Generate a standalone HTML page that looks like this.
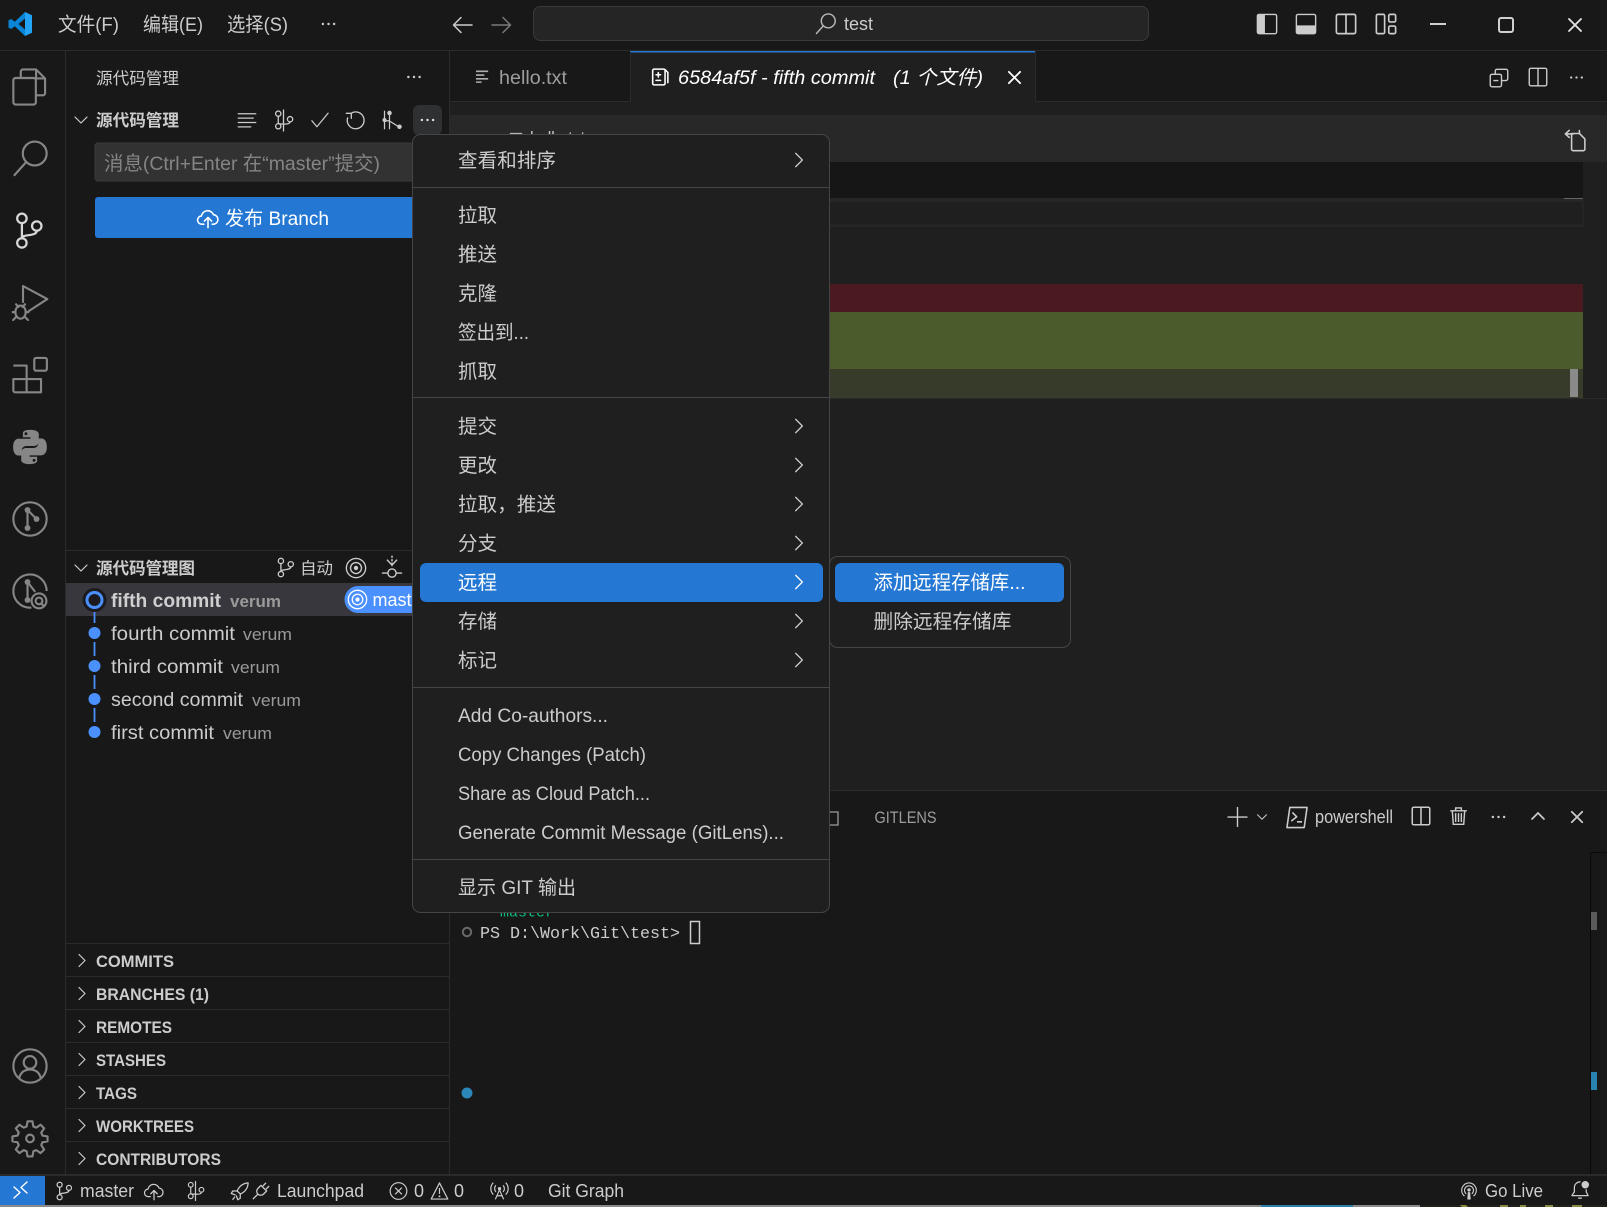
<!DOCTYPE html>
<html><head><meta charset="utf-8"><title>VS Code</title>
<style>
html,body{margin:0;padding:0;background:#181818;width:1607px;height:1207px;overflow:hidden}
svg{display:block;position:absolute;left:0;top:0}
symbol{overflow:visible}
text{font-family:"Liberation Sans","Noto Sans CJK SC",sans-serif;fill:#cccccc;font-size:19.5px}
.c{fill:none;stroke:currentColor;stroke-width:1;stroke-linecap:round;stroke-linejoin:round}
.f{fill:currentColor;stroke:none}
.s{font-size:16.6px}
.b{font-weight:700}
.h{font-size:17px;font-weight:700}
.st{font-size:18px;fill:#cccccc}
.v{font-size:17px;fill:#9a9a9a}
.m{font-family:"Liberation Mono","Noto Sans CJK SC",monospace;font-size:16.7px}
</style></head><body>
<svg width="1607" height="1207" viewBox="0 0 1607 1207" xmlns="http://www.w3.org/2000/svg">
<defs>
<symbol id="files" viewBox="0 0 16 16"><path style="stroke-width:inherit" fill="none" stroke="currentColor" stroke-linecap="round" stroke-linejoin="round" d="M3.900 4V1.200a1 1 0 0 1 1-1h5.800l4 4v6.500a1 1 0 0 1-1 1h-2.900M10.700.2v4h4M1.600 4h8a1 1 0 0 1 1 1v9.800a1 1 0 0 1-1 1h-8a1 1 0 0 1-1-1V5a1 1 0 0 1 1-1z"/></symbol>
<symbol id="search" viewBox="0 0 16 16"><circle fill="none" stroke="currentColor" cx="10.100" cy="6" r="5.300"/><path fill="none" stroke="currentColor" stroke-linecap="round" d="M6.300 9.800L1.100 15.600"/></symbol>
<symbol id="scm" viewBox="0 0 16 16"><g fill="none" stroke="currentColor" stroke-linecap="round"><circle cx="4.400" cy="2.400" r="2.100"/><circle cx="4.400" cy="13.300" r="2.100"/><circle cx="11" cy="5.800" r="2.100"/><path d="M4.400 4.500v6.700M11 7.900c0 2.700-6.600 1.300-6.600 3.300"/></g></symbol>
<symbol id="debug" viewBox="0 0 16 16"><g fill="none" stroke="currentColor" stroke-linecap="round" stroke-linejoin="round"><path d="M4.900.9L15.700 6.700 7.500 12M4.900.9V8"/><ellipse cx="3.800" cy="12.500" rx="2.300" ry="2.900"/><path d="M1.800 9l1.100 1.200M5.800 9L4.700 10.200M.3 12.500h1.200M6.100 12.500h1.200M.5 16l1.600-1.600M7.100 16l-1.600-1.600"/></g></symbol>
<symbol id="ext" viewBox="0 0 16 16"><g fill="none" stroke="currentColor" stroke-linejoin="round"><rect x="9.900" y=".4" width="5.600" height="5.700" rx=".8"/><path d="M.6 3.800h5.900v11.900M.6 9.800h12.300v5.900H1.400a.8.800 0 0 1-.8-.8z"/></g></symbol>
<symbol id="python" viewBox="0 0 16 16"><g id="pyh"><path fill="currentColor" d="M8 .8C4.800.8 5 2.200 5 2.200v1.700h3.200v.6H3.400S.9 4.300.9 8s2.200 3.600 2.200 3.600h1.400V9.800s-.1-2.200 2.100-2.200h3s2.100 0 2.100-2V2.600S12 .8 8 .8z"/><circle cx="6.300" cy="2.400" r=".6" fill="#181818"/></g><use href="#pyh" transform="rotate(180 8 8)"/></symbol>
<symbol id="gitg" viewBox="0 0 16 16"><circle fill="none" stroke="currentColor" cx="8" cy="8" r="7.400"/><g fill="currentColor"><circle cx="6.900" cy="4" r="1.300"/><circle cx="6.900" cy="12" r="1.300"/><circle cx="10.900" cy="8" r="1.300"/></g><path fill="none" stroke="currentColor" d="M6.900 4v8M6.900 4l4 4"/></symbol>
<symbol id="insp" viewBox="0 0 16 16"><path fill="none" stroke="currentColor" d="M8.600 15.400A7.400 7.400 0 1 1 15.400 8"/><g fill="currentColor"><circle cx="6.900" cy="4" r="1.300"/><circle cx="6.900" cy="12" r="1.300"/></g><path fill="none" stroke="currentColor" d="M6.900 4v8M6.900 4l3.400 4.400"/><circle fill="none" stroke="currentColor" cx="12" cy="12.400" r="3.300"/><circle fill="none" stroke="currentColor" cx="12" cy="12.400" r="1.500"/><path fill="none" stroke="currentColor" d="M13.200 13.700l1 1"/></symbol>
<symbol id="acct" viewBox="0 0 16 16"><g fill="none" stroke="currentColor" stroke-linecap="round"><circle cx="8" cy="8" r="7.400"/><circle cx="8" cy="6.400" r="2.800"/><path d="M3.200 13.400c.7-2.800 2.600-3.800 4.800-3.800s4.100 1 4.800 3.800"/></g></symbol>
<symbol id="gear" viewBox="0 0 16 16"><path fill="none" stroke="currentColor" stroke-linejoin="round" d="M6.900.6h2.200l.4 2.300 1.300.5 1.900-1.300 1.600 1.600-1.300 1.900.5 1.300 2.300.4v2.200l-2.300.4-.5 1.300 1.300 1.900-1.600 1.600-1.900-1.300-1.300.5-.4 2.300H6.900l-.4-2.300-1.300-.5-1.900 1.300L1.700 13.100 3 11.200l-.5-1.300-2.300-.4V7.300l2.300-.4.5-1.300L1.700 3.700l1.600-1.600 1.900 1.300 1.300-.5z"/><circle fill="none" stroke="currentColor" cx="8" cy="8.200" r="1.700"/></symbol>
<symbol id="list" viewBox="0 0 16 16"><path class="c" d="M1 3h14M1 6.500h12M1 10h14M1 13.500h10"/></symbol>
<symbol id="cgraph" viewBox="0 0 16 16"><circle class="c" cx="4" cy="2.800" r="2"/><circle class="c" cx="4" cy="12.400" r="2"/><circle class="c" cx="13" cy="7" r="2"/><path class="c" d="M8 0v16M4 4.800v5.600M13 9c0 2-5 2-9 1.400"/></symbol>
<symbol id="chk" viewBox="0 0 16 16"><path class="c" d="M1.500 8.600l4 4.800L14.500 2.500"/></symbol>
<symbol id="refr" viewBox="0 0 16 16"><path class="c" d="M4.500 2.600A6.400 6.400 0 1 1 2 6M4.800 6.400V2.500H1"/></symbol>
<symbol id="fork" viewBox="0 0 16 16"><circle class="f" cx="6" cy="2.400" r="1.800"/><circle class="f" cx="2" cy="8" r="1.600"/><circle class="f" cx="14" cy="13.400" r="1.800"/><path class="c" d="M6 1v14M2 1v14M2 9l3.500-.5 8 5" stroke-width="1.200"/></symbol>
<symbol id="dots" viewBox="0 0 16 16"><circle class="f" cx="3" cy="8" r="1.100"/><circle class="f" cx="8" cy="8" r="1.100"/><circle class="f" cx="13" cy="8" r="1.100"/></symbol>
<symbol id="cd" viewBox="0 0 16 16"><path fill="none" stroke="currentColor" stroke-linecap="round" stroke-linejoin="round" d="M2 5l6 6 6-6"/></symbol>
<symbol id="cr" viewBox="0 0 16 16"><path fill="none" stroke="currentColor" stroke-linecap="round" stroke-linejoin="round" d="M5 2l6 6-6 6"/></symbol>
<symbol id="x" viewBox="0 0 16 16"><path fill="none" stroke="currentColor" stroke-linecap="round" d="M2 2l12 12M14 2L2 14"/></symbol>
<symbol id="cloud" viewBox="0 0 16 16"><g fill="none" stroke="currentColor" stroke-linecap="round" stroke-linejoin="round"><path d="M5 12.500H3.600a3 3 0 0 1-.4-6A4.600 4.600 0 0 1 12 5.600a3.500 3.500 0 0 1 .5 6.900H11"/><path d="M8 15V8M5.400 10.200L8 7.600l2.600 2.600"/></g></symbol>
<symbol id="branch" viewBox="0 0 16 16"><g fill="none" stroke="currentColor" stroke-linecap="round"><circle cx="4.500" cy="3" r="2"/><circle cx="4.500" cy="13" r="2"/><circle cx="12" cy="5.500" r="2"/><path d="M4.500 5v6M12 7.500c0 3-7.500 1.500-7.500 3.500"/></g></symbol>
<symbol id="target" viewBox="0 0 16 16"><circle fill="none" stroke="currentColor" cx="8" cy="8" r="7"/><circle fill="none" stroke="currentColor" cx="8" cy="8" r="4"/><circle fill="currentColor" cx="8" cy="8" r="1.600"/></symbol>
<symbol id="down" viewBox="0 0 16 16"><path class="c" d="M8 0v1M8 2.600v1M8 5.200V7M4.600 3l3.400 3.600L11.400 3M1 12.400h3.600M11.400 12.400H15"/><circle class="c" cx="8" cy="12.400" r="3"/></symbol>
<symbol id="l1" viewBox="0 0 16 16"><rect class="c" x="1" y="1" width="14" height="14" rx="1.200"/><rect class="f" x="1" y="1" width="5.500" height="14"/></symbol>
<symbol id="l2" viewBox="0 0 16 16"><rect class="c" x="1" y="1" width="14" height="14" rx="1.200"/><rect class="f" x="1" y="9" width="14" height="6"/></symbol>
<symbol id="l3" viewBox="0 0 16 16"><rect fill="none" stroke="currentColor" x="1" y="1" width="14" height="14" rx="1.200"/><path fill="none" stroke="currentColor" d="M8 1v14"/></symbol>
<symbol id="l4" viewBox="0 0 16 16"><g fill="none" stroke="currentColor"><rect x="1" y="1" width="6" height="14" rx="1"/><rect x="10" y="1" width="5" height="5.500" rx="1"/><rect x="10" y="9.500" width="5" height="5.500" rx="1"/></g></symbol>
<symbol id="file" viewBox="0 0 16 16"><g fill="none" stroke="currentColor" stroke-linecap="round"><rect x="1.500" y="1" width="11" height="14" rx="1.200"/><path d="M12.500 1.500l2.500 2.500v9M4.500 6h4M6.500 4v4M4.500 11h4"/></g></symbol>
<symbol id="lines" viewBox="0 0 16 16"><path fill="none" stroke="currentColor" d="M1 2.500h13M1 6.500h9M1 10.500h13M1 14h6"/></symbol>
<symbol id="copy2" viewBox="0 0 16 16"><g fill="none" stroke="currentColor"><rect x="1" y="5" width="9" height="10" rx="1.400"/><path d="M5 5V2.400A1.400 1.400 0 0 1 6.400 1h7.200A1.400 1.400 0 0 1 15 2.400v6.200A1.400 1.400 0 0 1 13.600 10H10M3.500 10h4"/></g></symbol>
<symbol id="rev" viewBox="0 0 16 16"><g fill="none" stroke="currentColor" stroke-linecap="round" stroke-linejoin="round"><path d="M5.500 3.500h5l3.500 3.500v6.500a1 1 0 0 1-1 1H6.500a1 1 0 0 1-1-1zM10.500 3.500V1.600M1.500 3.800L4 1.500M1.500 3.800L4 6M1.500 3.800h5"/></g></symbol>
<symbol id="term" viewBox="0 0 16 16"><path fill="none" stroke="currentColor" stroke-linejoin="round" d="M3 1h12l-2 14H1zM4.800 4.500l3 3-3.800 3M8 11h3.500"/></symbol>
<symbol id="trash" viewBox="0 0 16 16"><path fill="none" stroke="currentColor" d="M1 3.600h14M5.600 3.400V1.200h4.800v2.200M2.800 3.600l.8 11.400h8.800l.8-11.400M5.600 5.600v7.400M8 5.600v7.400M10.400 5.600v7.400"/></symbol>
<symbol id="plus" viewBox="0 0 16 16"><path fill="none" stroke="currentColor" d="M8 0v16M0 8h16"/></symbol>
<symbol id="up" viewBox="0 0 16 16"><path fill="none" stroke="currentColor" stroke-linecap="round" d="M2 11l6-6 6 6"/></symbol>
<symbol id="rocket" viewBox="0 0 16 16"><path fill="none" stroke="currentColor" stroke-linejoin="round" d="M14.500 1.500c-4 .3-7 2.500-8.800 6.500l2.600 2.400c4-1.800 6-4.800 6.200-8.900zM5.500 8H2.200L1 10l3.500 1.200M8.200 10.500V13.800L6.200 15 5 11.500M4 12.500l-2 2.500"/></symbol>
<symbol id="plug" viewBox="0 0 16 16"><path fill="none" stroke="currentColor" stroke-linejoin="round" d="M9.500 4L12 1.500M12 6.500L14.500 4M8 3.500l4.500 4.500-2.500 2.500a3 3 0 0 1-4.500-4.500zM5.500 10.500L1.500 14.500"/></symbol>
<symbol id="err" viewBox="0 0 16 16"><circle fill="none" stroke="currentColor" cx="8" cy="8" r="7"/><path fill="none" stroke="currentColor" d="M5.200 5.200l5.600 5.600M10.800 5.200l-5.600 5.600"/></symbol>
<symbol id="warn" viewBox="0 0 16 16"><path fill="none" stroke="currentColor" stroke-linejoin="round" d="M8 1.200L15 14.800H1zM8 5.500v5"/><circle fill="currentColor" cx="8" cy="12.500" r=".8"/></symbol>
<symbol id="radio" viewBox="0 0 16 16"><circle fill="currentColor" cx="8" cy="6" r="1.400"/><path fill="none" stroke="currentColor" d="M5 3.200a4 4 0 0 0 0 5.600M11 3.200a4 4 0 0 1 0 5.600M2.800 1a7 7 0 0 0 0 10M13.200 1a7 7 0 0 1 0 10M8 7l-3.500 8M8 7l3.500 8M5.800 12h4.400"/></symbol>
<symbol id="live" viewBox="0 0 16 16"><path fill="none" stroke="currentColor" d="M4 12.500a6.500 6.500 0 1 1 8 0M5.500 10.500a4 4 0 1 1 5 0"/><circle fill="currentColor" cx="8" cy="7" r="1.500"/><path fill="currentColor" d="M7 9h2l.5 6.500h-3z"/></symbol>
<symbol id="bell" viewBox="0 0 16 16"><path fill="none" stroke="currentColor" stroke-linejoin="round" d="M8.500 1.500A4.600 4.600 0 0 0 3.500 6v3.500L1.500 12.500h13l-1.500-3V7.500M6.500 14.500h3"/><circle fill="currentColor" cx="12.200" cy="3.800" r="3"/></symbol>
</defs>

<!-- base regions -->
<rect width="1607" height="1207" fill="#181818"/>
<rect x="0" y="50" width="1607" height="1" fill="#2b2b2b"/>
<rect x="65" y="51" width="1" height="1124" fill="#2b2b2b"/>
<rect x="449" y="51" width="1" height="1124" fill="#2b2b2b"/>

<!-- editor -->
<rect x="450" y="102" width="1157" height="688" fill="#1f1f1f"/>
<rect x="450" y="101" width="1157" height="1" fill="#2b2b2b"/>
<rect x="450" y="115" width="1157" height="47" fill="#282828"/>
<rect x="450" y="162" width="1133" height="36" fill="#161616"/>
<rect x="450" y="198" width="1133" height="3" fill="#262626"/>
<rect x="450" y="201" width="1133" height="24" fill="#1f1f1f" stroke="#2a2a2a"/>
<rect x="450" y="225" width="1133" height="2" fill="#262626"/>
<rect x="1564" y="198" width="19" height="1" fill="#666"/>
<rect x="450" y="284" width="1133" height="28" fill="#4b1a20"/>
<rect x="450" y="312" width="1133" height="57" fill="#4b5b2c"/>
<rect x="450" y="369" width="1133" height="29" fill="#373c2a"/>
<rect x="450" y="398" width="1157" height="1" fill="#2b2b2b"/>
<rect x="1570" y="369" width="8" height="28" fill="#8a8a8a"/>

<!-- tabs -->
<rect x="630" y="51" width="405" height="51" fill="#1f1f1f"/>
<rect x="630" y="51" width="405" height="1.500" fill="#2678d4"/>
<rect x="630" y="52" width="1" height="50" fill="#2b2b2b"/>
<rect x="1035" y="52" width="1" height="50" fill="#2b2b2b"/>
<g style="color:#b0b0b0" stroke-width="1.700"><use href="#lines" x="475" y="69" width="15" height="15"/></g>
<text x="499" y="84" textLength="68" lengthAdjust="spacingAndGlyphs" style="fill:#9d9d9d">hello.txt</text>
<g style="color:#ffffff" stroke-width="1.400"><use href="#file" x="651" y="68" width="18" height="18"/></g>
<text x="678" y="84" textLength="197" lengthAdjust="spacingAndGlyphs" font-style="italic" style="fill:#ffffff">6584af5f - fifth commit</text>
<text x="893" y="84" textLength="90" lengthAdjust="spacingAndGlyphs" font-style="italic" style="fill:#ffffff">(1 个文件)</text>
<g style="color:#ffffff" stroke-width="1.900"><use href="#x" x="1007" y="70" width="15" height="15"/></g>
<g style="color:#cccccc" stroke-width="1.100"><use href="#copy2" x="1489" y="68" width="20" height="20"/><use href="#l3" x="1528" y="67" width="20" height="20"/></g>
<g style="color:#cccccc"><use href="#dots" x="1567" y="69" width="19" height="17"/></g>
<g style="color:#cccccc" stroke-width="1"><use href="#rev" x="1563" y="128" width="25" height="25"/></g>
<text x="530" y="145" textLength="55" lengthAdjust="spacingAndGlyphs">hello.txt</text>
<g style="color:#cccccc" stroke-width="1"><use href="#lines" x="509" y="131" width="15" height="15"/></g>

<!-- titlebar -->
<g><path fill="#0a84d6" d="M25 12L14.800 21.800 11.200 19 8.500 20.200V27.800L11.200 29 14.800 26.200 25 36V29.500L18.500 24 25 18.500Z"/><path fill="#23a3f5" d="M25 12L32 15.200V32.800L25 36Z"/></g>
<text x="58" y="31" textLength="61" lengthAdjust="spacingAndGlyphs">文件(F)</text>
<text x="143" y="31" textLength="60" lengthAdjust="spacingAndGlyphs">编辑(E)</text>
<text x="227" y="31" textLength="61" lengthAdjust="spacingAndGlyphs">选择(S)</text>
<g style="color:#cccccc"><use href="#dots" x="318" y="15" width="21" height="18"/></g>
<path d="M472 25H454M461 17.500L453.500 25 461 32.500" fill="none" stroke="#cccccc" stroke-width="1.500" stroke-linecap="round" stroke-linejoin="round"/>
<path d="M492 25H510M503 17.500L510.500 25 503 32.500" fill="none" stroke="#7a7a7a" stroke-width="1.500" stroke-linecap="round" stroke-linejoin="round"/>
<rect x="533.500" y="6.500" width="615" height="34" rx="7" fill="#252525" stroke="#3a3a3a"/>
<g style="color:#b8b8b8" stroke-width="1.100"><use href="#search" x="815" y="13" width="21" height="21"/></g>
<text x="844" y="30" textLength="29" lengthAdjust="spacingAndGlyphs" class="st">test</text>
<g style="color:#cccccc" stroke-width="1.200"><use href="#l1" x="1256" y="13" width="22" height="22"/><use href="#l2" x="1295" y="13" width="22" height="22"/><use href="#l3" x="1335" y="13" width="22" height="22"/><use href="#l4" x="1375" y="13" width="22" height="22"/></g>
<rect x="1430" y="23" width="16" height="2" fill="#d0d0d0"/>
<rect x="1499" y="18" width="14" height="14" rx="2" fill="none" stroke="#d0d0d0" stroke-width="2"/>
<g style="color:#e0e0e0" stroke-width="1.900"><use href="#x" x="1567" y="17" width="16" height="16"/></g>

<!-- activity bar -->
<g style="color:#868686" stroke-width=".95">
<use href="#files" x="12" y="69" width="36" height="36"/>
<use href="#search" x="12" y="140" width="36" height="36"/>
<use href="#debug" x="12" y="284" width="36" height="36"/>
<use href="#ext" x="12" y="357" width="36" height="36"/>
<use href="#python" x="11" y="428" width="38" height="38"/>
<use href="#gitg" x="12" y="501" width="36" height="36"/>
<use href="#insp" x="12" y="573" width="36" height="36"/>
<use href="#acct" x="12" y="1048" width="36" height="36"/>
<use href="#gear" x="12" y="1120" width="36" height="36"/>
</g>
<g style="color:#d7d7d7" stroke-width="1"><use href="#scm" x="12" y="213" width="36" height="36"/></g>

<!-- sidebar -->
<text class="s" x="96" y="84" textLength="83">源代码管理</text>
<g style="color:#cccccc"><use href="#dots" x="404" y="68" width="20" height="18"/></g>
<g style="color:#cccccc" stroke-width="1.200"><use href="#cd" x="73" y="112" width="16" height="16"/></g>
<text class="s b" x="96" y="126" textLength="83">源代码管理</text>
<g style="color:#cccccc" stroke-width="1.200">
<use href="#list" x="237" y="110" width="20" height="20"/>
<use href="#cgraph" x="273" y="110" width="21" height="21"/>
<use href="#chk" x="310" y="110" width="20" height="20"/>
<use href="#refr" x="345" y="110" width="21" height="21"/>
<use href="#fork" x="382" y="110" width="20" height="20"/>
</g>
<rect x="413" y="105" width="29" height="30" rx="6" fill="#2f3031"/>
<g style="color:#dddddd"><use href="#dots" x="417" y="111" width="21" height="18"/></g>
<rect x="95" y="143" width="330" height="38" rx="3" fill="#323232" stroke="#3a3a3a"/>
<text x="104" y="170" textLength="276" lengthAdjust="spacingAndGlyphs" style="fill:#858585">消息(Ctrl+Enter 在“master”提交)</text>
<rect x="95" y="197" width="330" height="41" rx="3" fill="#2477d2"/>
<g style="color:#ffffff" stroke-width="1.150"><use href="#cloud" x="197" y="207" width="22" height="22"/></g>
<text x="225" y="225" textLength="104" lengthAdjust="spacingAndGlyphs" style="fill:#fff">发布 Branch</text>

<!-- graph -->
<rect x="66" y="550" width="383" height="1" fill="#2b2b2b"/>
<g style="color:#cccccc" stroke-width="1.200"><use href="#cd" x="73" y="560" width="16" height="16"/></g>
<text class="s b" x="96" y="574" textLength="99">源代码管理图</text>
<g style="color:#cccccc" stroke-width="1"><use href="#branch" x="275" y="557" width="21" height="21"/></g>
<text class="s" x="300" y="574" textLength="33">自动</text>
<g style="color:#cccccc" stroke-width="1"><use href="#target" x="345" y="557" width="22" height="22"/><use href="#down" x="381" y="554" width="22" height="26"/></g>
<rect x="66" y="583" width="383" height="33" fill="#37373d"/>
<g fill="none" stroke="#4a90ff" stroke-width="1.800"><path d="M94.500 612V623M94.500 642V656M94.500 675V689M94.500 708V722"/></g>
<circle cx="94.500" cy="600" r="12" fill="#1a1a1f"/>
<circle cx="94.500" cy="600" r="7.500" fill="none" stroke="#4a90ff" stroke-width="3"/>
<g fill="#4a90ff"><circle cx="94.500" cy="633" r="6"/><circle cx="94.500" cy="666" r="6"/><circle cx="94.500" cy="699" r="6"/><circle cx="94.500" cy="732" r="6"/></g>
<text x="111" y="607" textLength="110" lengthAdjust="spacingAndGlyphs" font-weight="700" style="fill:#cfcfcf">fifth commit</text>
<text class="v" x="230" y="607" textLength="51" lengthAdjust="spacingAndGlyphs" font-weight="700">verum</text>
<text x="111" y="640" textLength="124" lengthAdjust="spacingAndGlyphs">fourth commit</text>
<text class="v" x="243" y="640" textLength="49" lengthAdjust="spacingAndGlyphs">verum</text>
<text x="111" y="673" textLength="112" lengthAdjust="spacingAndGlyphs">third commit</text>
<text class="v" x="231" y="673" textLength="49" lengthAdjust="spacingAndGlyphs">verum</text>
<text x="111" y="706" textLength="132" lengthAdjust="spacingAndGlyphs">second commit</text>
<text class="v" x="252" y="706" textLength="49" lengthAdjust="spacingAndGlyphs">verum</text>
<text x="111" y="739" textLength="103" lengthAdjust="spacingAndGlyphs">first commit</text>
<text class="v" x="223" y="739" textLength="49" lengthAdjust="spacingAndGlyphs">verum</text>
<path d="M358 586H425V613H358A13.500 13.500 0 0 1 358 586Z" fill="#4a90ff"/>
<g style="color:#ffffff" stroke-width="1"><use href="#target" x="347" y="589" width="21" height="21"/></g>
<text x="372.500" y="606" style="fill:#fff;font-size:18px" textLength="55" lengthAdjust="spacingAndGlyphs">master</text>

<!-- sidebar sections -->
<g fill="#2b2b2b"><rect x="66" y="943" width="383" height="1"/><rect x="66" y="976" width="383" height="1"/><rect x="66" y="1009" width="383" height="1"/><rect x="66" y="1042" width="383" height="1"/><rect x="66" y="1075" width="383" height="1"/><rect x="66" y="1108" width="383" height="1"/><rect x="66" y="1141" width="383" height="1"/></g>
<g style="color:#cccccc" stroke-width="1.200">
<use href="#cr" x="74" y="952" width="16" height="17"/><use href="#cr" x="74" y="985" width="16" height="17"/><use href="#cr" x="74" y="1018" width="16" height="17"/><use href="#cr" x="74" y="1051" width="16" height="17"/><use href="#cr" x="74" y="1084" width="16" height="17"/><use href="#cr" x="74" y="1117" width="16" height="17"/><use href="#cr" x="74" y="1150" width="16" height="17"/>
</g>
<text class="h" x="96" y="967" textLength="78" lengthAdjust="spacingAndGlyphs">COMMITS</text>
<text class="h" x="96" y="1000" textLength="113" lengthAdjust="spacingAndGlyphs">BRANCHES (1)</text>
<text class="h" x="96" y="1033" textLength="76" lengthAdjust="spacingAndGlyphs">REMOTES</text>
<text class="h" x="96" y="1066" textLength="70" lengthAdjust="spacingAndGlyphs">STASHES</text>
<text class="h" x="96" y="1099" textLength="41" lengthAdjust="spacingAndGlyphs">TAGS</text>
<text class="h" x="96" y="1132" textLength="98" lengthAdjust="spacingAndGlyphs">WORKTREES</text>
<text class="h" x="96" y="1165" textLength="125" lengthAdjust="spacingAndGlyphs">CONTRIBUTORS</text>

<!-- panel -->
<rect x="450" y="790" width="1157" height="385" fill="#181818"/>
<rect x="450" y="790" width="1157" height="1" fill="#2b2b2b"/>
<path d="M829 812H838V825H829" fill="none" stroke="#9d9d9d" stroke-width="1.300"/>
<text x="874.500" y="823" textLength="62" lengthAdjust="spacingAndGlyphs" style="font-size:16.500px;fill:#9d9d9d">GITLENS</text>
<g style="color:#cccccc" stroke-width="1.100"><use href="#plus" x="1227" y="807" width="21" height="20"/></g>
<g style="color:#cccccc" stroke-width="1.300"><use href="#cd" x="1256" y="811" width="12" height="12"/></g>
<g style="color:#cccccc" stroke-width="1.100"><use href="#term" x="1285" y="806" width="24" height="23"/></g>
<text x="1315" y="823" textLength="78" lengthAdjust="spacingAndGlyphs" class="st">powershell</text>
<g style="color:#cccccc" stroke-width="1.200"><use href="#l3" x="1411" y="806" width="20" height="20"/><use href="#trash" x="1449" y="805" width="19" height="22"/></g>
<g style="color:#cccccc"><use href="#dots" x="1489" y="808" width="19" height="18"/></g>
<g style="color:#cccccc" stroke-width="1.700"><use href="#up" x="1530" y="808" width="16" height="16"/></g>
<g style="color:#cccccc" stroke-width="2"><use href="#x" x="1570" y="810" width="14" height="14"/></g>
<text x="500" y="916.500" textLength="54" lengthAdjust="spacingAndGlyphs" style="font-size:15px;fill:#0dbc79" class="m">master</text>
<circle cx="467" cy="932" r="4.200" fill="none" stroke="#6a6a6a" stroke-width="2"/>
<text class="m" x="480" y="938" textLength="200">PS D:\Work\Git\test&gt;</text>
<rect x="690.500" y="921.500" width="9" height="22" fill="none" stroke="#cccccc" stroke-width="1.500"/>
<circle cx="467" cy="1093" r="5.500" fill="#2a87b8"/>
<rect x="1590" y="852" width="17" height="322" fill="#181818"/>
<rect x="1590" y="852" width="1" height="322" fill="#0a0a0a"/>
<rect x="1590" y="852" width="17" height="1" fill="#0a0a0a"/>
<rect x="1591" y="912" width="6" height="18" fill="#5a5a5a"/>
<rect x="1591" y="1072" width="6" height="18" fill="#2a82b0"/>

<!-- status bar -->
<rect x="0" y="1174" width="1607" height="2" fill="#2b2b2b"/>
<rect x="0" y="1176" width="1607" height="29" fill="#181818"/>
<rect x="0" y="1176" width="45" height="29" fill="#2477d2"/>
<path d="M14 1187l6 5.500-6 5.500M27 1182l-6 5.500 6 5.500" fill="none" stroke="#fff" stroke-width="1.400" stroke-linecap="round" stroke-linejoin="round"/>
<g style="color:#cccccc" stroke-width="1">
<use href="#branch" x="54" y="1181" width="20" height="20"/>
<use href="#cloud" x="144" y="1181" width="20" height="20"/>
<use href="#cgraph" x="186" y="1181" width="19" height="20"/>
<use href="#rocket" x="230" y="1181" width="20" height="20"/>
<use href="#plug" x="251" y="1181" width="20" height="20"/>
<use href="#err" x="389" y="1181" width="19" height="20"/>
<use href="#warn" x="430" y="1181" width="19" height="20"/>
<use href="#radio" x="490" y="1181" width="19" height="20"/>
<use href="#live" x="1460" y="1181" width="18" height="20"/>
<use href="#bell" x="1570" y="1180" width="20" height="20"/>
</g>
<text class="st" x="80" y="1197" textLength="54" lengthAdjust="spacingAndGlyphs">master</text>
<text class="st" x="277" y="1197" textLength="87" lengthAdjust="spacingAndGlyphs">Launchpad</text>
<text class="st" x="414" y="1197">0</text>
<text class="st" x="454" y="1197">0</text>
<text class="st" x="514" y="1197">0</text>
<text class="st" x="548" y="1197" textLength="76" lengthAdjust="spacingAndGlyphs">Git Graph</text>
<text class="st" x="1485" y="1197" textLength="58" lengthAdjust="spacingAndGlyphs">Go Live</text>

<!-- bottom screenshot edge -->
<rect x="0" y="1205" width="1261" height="2" fill="#8a8a8a"/>
<rect x="1261" y="1205" width="92" height="2" fill="#2a7ea8"/>
<rect x="1353" y="1205" width="67" height="2" fill="#8a8a8a"/>
<rect x="1420" y="1205" width="187" height="2" fill="#22221c"/>
<path d="M1460 1205h6l2 2h-6zM1500 1205h8v2h-8zM1520 1205h6v2h-6zM1545 1205h8v2h-8zM1572 1205h10v2h-10z" fill="#8a8a40"/>

<!-- context menu -->
<rect x="412.500" y="134.500" width="417" height="778" rx="8" fill="#1f1f1f" stroke="#454545"/>
<g fill="#454545"><rect x="413" y="187" width="416" height="1"/><rect x="413" y="397" width="416" height="1"/><rect x="413" y="687" width="416" height="1"/><rect x="413" y="859" width="416" height="1"/></g>
<rect x="420" y="563" width="403" height="39" rx="6" fill="#2477d2"/>
<text x="458" y="167" textLength="98">查看和排序</text>
<text x="458" y="222" textLength="39">拉取</text>
<text x="458" y="261" textLength="39">推送</text>
<text x="458" y="300" textLength="39">克隆</text>
<text x="458" y="339" textLength="71" lengthAdjust="spacingAndGlyphs">签出到...</text>
<text x="458" y="378" textLength="39">抓取</text>
<text x="458" y="433" textLength="39">提交</text>
<text x="458" y="472" textLength="39">更改</text>
<text x="458" y="511" textLength="98">拉取，推送</text>
<text x="458" y="550" textLength="39">分支</text>
<text x="458" y="589" textLength="39" style="fill:#fff">远程</text>
<text x="458" y="628" textLength="39">存储</text>
<text x="458" y="667" textLength="39">标记</text>
<text x="458" y="722" textLength="150" lengthAdjust="spacingAndGlyphs">Add Co-authors...</text>
<text x="458" y="761" textLength="188" lengthAdjust="spacingAndGlyphs">Copy Changes (Patch)</text>
<text x="458" y="800" textLength="192" lengthAdjust="spacingAndGlyphs">Share as Cloud Patch...</text>
<text x="458" y="839" textLength="326" lengthAdjust="spacingAndGlyphs">Generate Commit Message (GitLens)...</text>
<text x="458" y="894" textLength="118" lengthAdjust="spacingAndGlyphs">显示 GIT 输出</text>
<g style="color:#cccccc" stroke-width="1.100">
<use href="#cr" x="790" y="151" width="18" height="18"/>
<use href="#cr" x="790" y="417" width="18" height="18"/>
<use href="#cr" x="790" y="456" width="18" height="18"/>
<use href="#cr" x="790" y="495" width="18" height="18"/>
<use href="#cr" x="790" y="534" width="18" height="18"/>
<use href="#cr" x="790" y="612" width="18" height="18"/>
<use href="#cr" x="790" y="651" width="18" height="18"/>
</g>
<g style="color:#ffffff" stroke-width="1.100"><use href="#cr" x="790" y="573" width="18" height="18"/></g>

<!-- submenu -->
<rect x="829.500" y="556.500" width="241" height="91" rx="8" fill="#1f1f1f" stroke="#454545"/>
<rect x="835" y="563" width="229" height="39" rx="6" fill="#2477d2"/>
<text x="873.500" y="589" textLength="152" lengthAdjust="spacingAndGlyphs" style="fill:#fff">添加远程存储库...</text>
<text x="873.500" y="628" textLength="138" lengthAdjust="spacingAndGlyphs">删除远程存储库</text>
</svg>
</body></html>
